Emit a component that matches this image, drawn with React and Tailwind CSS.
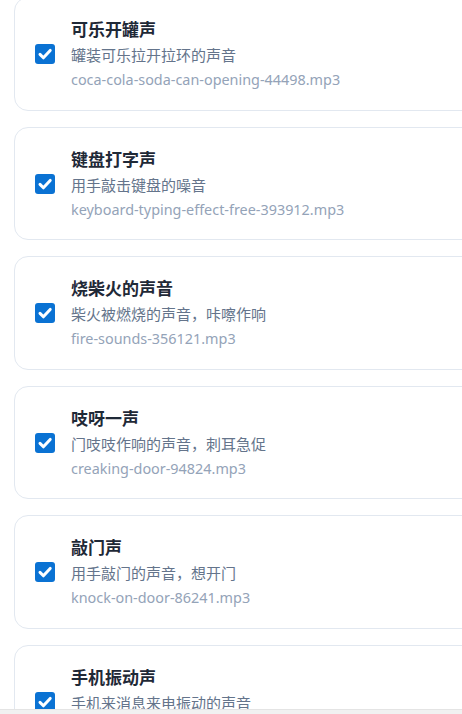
import React from "react";

const sounds = [
  { title: "可乐开罐声", desc: "罐装可乐拉开拉环的声音", file: "coca-cola-soda-can-opening-44498.mp3" },
  { title: "键盘打字声", desc: "用手敲击键盘的噪音", file: "keyboard-typing-effect-free-393912.mp3" },
  { title: "烧柴火的声音", desc: "柴火被燃烧的声音，咔嚓作响", file: "fire-sounds-356121.mp3" },
  { title: "吱呀一声", desc: "门吱吱作响的声音，刺耳急促", file: "creaking-door-94824.mp3" },
  { title: "敲门声", desc: "用手敲门的声音，想开门", file: "knock-on-door-86241.mp3" },
  { title: "手机振动声", desc: "手机来消息来电振动的声音", file: "phone-vibration-82310.mp3" },
];

const Check = () => (
  <div className="w-5 h-5 shrink-0 rounded-[3px] bg-[#0a72d3]">
    <svg viewBox="0 0 20 20" className="w-5 h-5" fill="none">
      <path d="M5 10.4 8.4 13.8 15.2 6.4" stroke="white" strokeWidth="3" strokeLinecap="round" strokeLinejoin="round" />
    </svg>
  </div>
);

const SoundCard = ({ item }) => (
  <div className="w-[600px] shrink-0 flex items-center gap-4 border border-[#e2e8f0] rounded-[14px] bg-white pl-5 pt-5 pb-[19.5px]">
    <Check />
    <div className="flex flex-col">
      <div className="text-[17px] leading-6 font-bold text-[#1f2937]">{item.title}</div>
      <div className="mt-[3px] text-[15px] leading-5 text-[#64748b]">{item.desc}</div>
      <div className="mt-[5px] text-[14.4px] leading-5 text-[#94a3b8]">{item.file}</div>
    </div>
  </div>
);

export default function App() {
  return (
    <div
      className="relative w-[462px] h-[714px] overflow-hidden bg-white"
      style={{ fontFamily: '"Noto Sans", "Noto Sans CJK SC", sans-serif' }}
    >
      <div className="flex flex-col gap-4 pl-[14px] -mt-[3px]">
        {sounds.map((s) => (
          <SoundCard key={s.file} item={s} />
        ))}
      </div>
      <div className="absolute left-0 right-0 bottom-0 h-[5px] bg-[#f1f1f1] border-t border-[#e4e4e4]" />
    </div>
  );
}
